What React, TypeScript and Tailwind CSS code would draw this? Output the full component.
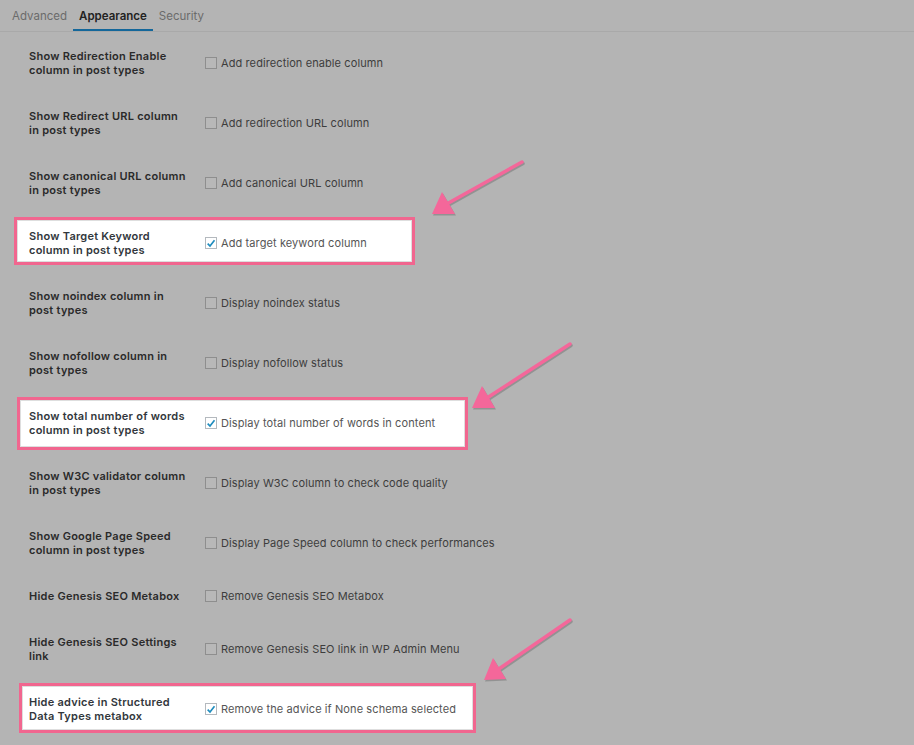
import React from "react";

type Row = {
  label: string[];
  option: string;
  checked?: boolean;
  box?: string;
};

const rows: Row[] = [
  { label: ["Show Redirection Enable", "column in post types"], option: "Add redirection enable column" },
  { label: ["Show Redirect URL column", "in post types"], option: "Add redirection URL column" },
  { label: ["Show canonical URL column", "in post types"], option: "Add canonical URL column" },
  {
    label: ["Show Target Keyword", "column in post types"],
    option: "Add target keyword column",
    checked: true,
    box: "left-[14px] top-[5px] w-[401px] h-[48px]",
  },
  { label: ["Show noindex column in", "post types"], option: "Display noindex status" },
  { label: ["Show nofollow column in", "post types"], option: "Display nofollow status" },
  {
    label: ["Show total number of words", "column in post types"],
    option: "Display total number of words in content",
    checked: true,
    box: "left-[17px] top-[5px] w-[451px] h-[53px]",
  },
  { label: ["Show W3C validator column", "in post types"], option: "Display W3C column to check code quality" },
  { label: ["Show Google Page Speed", "column in post types"], option: "Display Page Speed column to check performances" },
  { label: ["Hide Genesis SEO Metabox"], option: "Remove Genesis SEO Metabox" },
  { label: ["Hide Genesis SEO Settings", "link"], option: "Remove Genesis SEO link in WP Admin Menu" },
  {
    label: ["Hide advice in Structured", "Data Types metabox"],
    option: "Remove the advice if None schema selected",
    checked: true,
    box: "left-[19px] top-[5px] w-[457px] h-[50px]",
  },
];

// annotation arrows: tail, tip, head top, head right
const arrows = [
  { tail: [522, 162], tip: [432, 214], top: [442, 192], right: [455, 214] },
  { tail: [570, 344], tip: [472, 408], top: [482, 386], right: [495, 408] },
  { tail: [570, 620], tip: [484, 680], top: [493, 658], right: [506, 679] },
];

function Checkbox({ checked }: { checked?: boolean }) {
  if (checked) {
    return (
      <span className="w-[12px] h-[12px] border border-[#b4b9be] bg-white flex items-center justify-center shrink-0">
        <svg width="11" height="11" viewBox="0 0 12 12" aria-hidden="true">
          <path d="M2 6.2 L4.8 9 L10.2 2.2" fill="none" stroke="#1e8cbe" strokeWidth="2" />
        </svg>
      </span>
    );
  }
  return <span className="w-[12px] h-[12px] border border-[#8e8e8e] bg-[#b8b8b8] shrink-0" />;
}

export default function App() {
  return (
    <div
      className="relative w-[914px] min-h-[745px] bg-[#b4b4b4] overflow-hidden"
      style={{ fontFamily: "Inter, 'Liberation Sans', sans-serif" }}
    >
      {/* Tabs */}
      <div className="h-[32px] border-b border-[#a9a9a9] flex items-stretch pl-[6px] text-[11.5px]">
        <div className="px-[6px] flex items-center text-[#6b6b6b] pt-[3px]">Advanced</div>
        <div className="px-[6px] flex items-center font-semibold text-[#222] border-b-2 border-[#14679a] pt-[5px]">
          Appearance
        </div>
        <div className="px-[6px] flex items-center text-[#6b6b6b] pt-[3px]">Security</div>
      </div>

      {/* Settings rows */}
      <div className="flex flex-col">
        {rows.map((r) => (
          <div key={r.option} className="relative flex items-center pt-[17px] pb-[15px] pl-[29px]">
            {r.box && (
              <div
                className={`absolute ${r.box} bg-white border-[3px] border-[#f1668f] shadow-[inset_0_0_0_1px_#dedede]`}
              />
            )}
            <div
              className={`relative w-[176px] text-[11px] leading-[14px] font-semibold tracking-[0.25px] whitespace-nowrap ${
                r.box ? "text-[#32373c]" : "text-[#2a2a2a]"
              }`}
            >
              {r.label.map((l, i) => (
                <div key={i}>{l}</div>
              ))}
            </div>
            <label className="relative flex items-center gap-[4px] text-[11px] leading-[14px] tracking-[0.1px]">
              <Checkbox checked={r.checked} />
              <span className={r.box ? "text-[#555]" : "text-[#3d3d3d]"}>{r.option}</span>
            </label>
          </div>
        ))}
      </div>

      {/* Annotation arrows */}
      <svg className="absolute left-0 top-0 pointer-events-none" width="914" height="745" aria-hidden="true">
        {arrows.map((a, i) => {
          const headBase = [(a.top[0] + a.right[0]) / 2, (a.top[1] + a.right[1]) / 2];
          return (
            <g key={i}>
              <g transform="translate(1,1.5)" opacity="0.18">
                <line x1={a.tail[0]} y1={a.tail[1]} x2={headBase[0]} y2={headBase[1]} stroke="#000" strokeWidth="3.5" strokeLinecap="round" />
                <polygon points={`${a.tip[0]},${a.tip[1]} ${a.top[0]},${a.top[1]} ${a.right[0]},${a.right[1]}`} fill="#000" />
              </g>
              <line x1={a.tail[0]} y1={a.tail[1]} x2={headBase[0]} y2={headBase[1]} stroke="#f4679a" strokeWidth="3.5" strokeLinecap="round" />
              <polygon points={`${a.tip[0]},${a.tip[1]} ${a.top[0]},${a.top[1]} ${a.right[0]},${a.right[1]}`} fill="#f4679a" />
            </g>
          );
        })}
      </svg>
    </div>
  );
}
